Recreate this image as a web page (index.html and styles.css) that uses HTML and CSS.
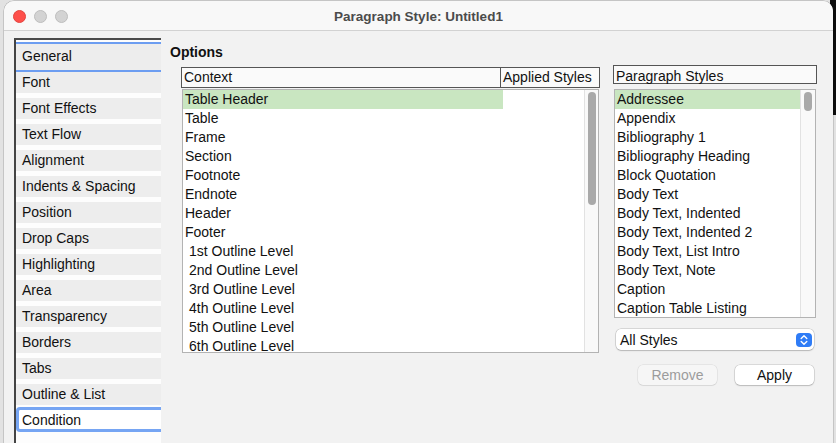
FILE: index.html
```html
<!DOCTYPE html>
<html lang="en">
<head>
<meta charset="utf-8">
<title>Paragraph Style: Untitled1</title>
<link rel="stylesheet" href="styles.css">
</head>
<body>
<div class="window">
  <header class="titlebar">
    <div class="lights">
      <span class="light red"></span>
      <span class="light"></span>
      <span class="light"></span>
    </div>
    <div class="title">Paragraph Style: Untitled1</div>
    <div></div>
  </header>
  <div class="content">
    <nav class="tabs">
      <div class="tab selected">General</div>
      <div class="tab">Font</div>
      <div class="tab">Font Effects</div>
      <div class="tab">Text Flow</div>
      <div class="tab">Alignment</div>
      <div class="tab">Indents &amp; Spacing</div>
      <div class="tab">Position</div>
      <div class="tab">Drop Caps</div>
      <div class="tab">Highlighting</div>
      <div class="tab">Area</div>
      <div class="tab">Transparency</div>
      <div class="tab">Borders</div>
      <div class="tab">Tabs</div>
      <div class="tab before-focus">Outline &amp; List</div>
      <div class="tab focused">Condition</div>
    </nav>
    <main class="main">
      <h2 class="heading">Options</h2>
      <div class="columns">
        <section class="context">
          <div class="thead">
            <span class="th th-ctx">Context</span>
            <span class="th th-app">Applied Styles</span>
          </div>
          <div class="list ctx-list">
            <div class="rows">
              <div class="row selected">Table Header</div>
              <div class="row">Table</div>
              <div class="row">Frame</div>
              <div class="row">Section</div>
              <div class="row">Footnote</div>
              <div class="row">Endnote</div>
              <div class="row">Header</div>
              <div class="row">Footer</div>
              <div class="row indent">1st Outline Level</div>
              <div class="row indent">2nd Outline Level</div>
              <div class="row indent">3rd Outline Level</div>
              <div class="row indent">4th Outline Level</div>
              <div class="row indent">5th Outline Level</div>
              <div class="row indent">6th Outline Level</div>
            </div>
            <div class="scroll"><div class="thumb ctx-thumb"></div></div>
          </div>
        </section>
        <section class="pstyles">
          <div class="ps-head">Paragraph Styles</div>
          <div class="list ps-list">
            <div class="rows">
              <div class="row selected">Addressee</div>
              <div class="row">Appendix</div>
              <div class="row">Bibliography 1</div>
              <div class="row">Bibliography Heading</div>
              <div class="row">Block Quotation</div>
              <div class="row">Body Text</div>
              <div class="row">Body Text, Indented</div>
              <div class="row">Body Text, Indented 2</div>
              <div class="row">Body Text, List Intro</div>
              <div class="row">Body Text, Note</div>
              <div class="row">Caption</div>
              <div class="row">Caption Table Listing</div>
            </div>
            <div class="scroll"><div class="thumb ps-thumb"></div></div>
          </div>
          <div class="select">
            <span class="select-label">All Styles</span>
            <svg class="stepper" width="16" height="14" viewBox="0 0 16 14">
              <rect x="0" y="0" width="16" height="14" rx="4" fill="#2f7cf6"/>
              <path d="M5.2 5.4 L8 2.8 L10.8 5.4" fill="none" stroke="#fff" stroke-width="1.4" stroke-linecap="round" stroke-linejoin="round"/>
              <path d="M5.2 8.6 L8 11.2 L10.8 8.6" fill="none" stroke="#fff" stroke-width="1.4" stroke-linecap="round" stroke-linejoin="round"/>
            </svg>
          </div>
          <div class="buttons">
            <button class="btn disabled" type="button">Remove</button>
            <button class="btn" type="button">Apply</button>
          </div>
        </section>
      </div>
    </main>
  </div>
</div>
</body>
</html>
```
FILE: styles.css
```css
html, body {
  margin: 0;
  padding: 0;
}
body {
  height: 443px;
  overflow: hidden;
  background: linear-gradient(#0d0d0d, #0d0d0d) right top / 6px 115px no-repeat, #e2e2e2;
  font-family: "Liberation Sans", Arial, sans-serif;
  font-size: 14px;
  color: #111;
}
.window {
  margin: 1px 3px 0 4px;
  height: 470px;
  background: #f2f2f2;
  border-radius: 10px 10px 0 0;
  box-shadow: 0 0 0 0.5px rgba(0,0,0,0.25);
  overflow: hidden;
}
.titlebar {
  height: 29px;
  background: #f8f8f8;
  border-bottom: 1px solid #d2d2d2;
  display: grid;
  grid-template-columns: 1fr auto 1fr;
  align-items: center;
}
.lights {
  display: flex;
  gap: 8px;
  padding-left: 9px;
  padding-top: 1px;
}
.light {
  width: 11px;
  height: 11px;
  border-radius: 50%;
  background: #d3d3d3;
  border: 0.5px solid #bdbdbd;
}
.light.red {
  background: #fe4f4a;
  border-color: #e2453f;
}
.title {
  font-weight: bold;
  font-size: 13.5px;
  color: #4b4b4b;
  padding-top: 1px;
}
.content {
  display: flex;
  align-items: flex-start;
  padding: 7px 0 0 10px;
}
.tabs {
  width: 145px;
  height: 420px;
  background: #fdfdfd;
  border-left: 2px solid #444;
  border-top: 2px solid #4a4a4a;
  padding-top: 2px;
  display: flex;
  flex-direction: column;
}
.tab {
  height: 21px;
  line-height: 21px;
  background: #ededed;
  padding-left: 6px;
  margin-bottom: 5px;
  color: #111;
}
.tab.selected {
  height: 26px;
  line-height: 24px;
  border-top: 2px solid #6c9df1;
  border-bottom: 2px solid #6c9df1;
  margin-bottom: 0;
}
.tab.before-focus {
  margin-bottom: 2px;
}
.tab.focused {
  height: 19px;
  line-height: 20px;
  background: #fff;
  border: 3px solid #76a5f3;
  border-right: none;
  border-radius: 4px 0 0 4px;
  padding-left: 3px;
}
.main {
  margin-left: 9px;
  padding-top: 6px;
  flex: 1;
}
.heading {
  margin: 0;
  font-size: 14px;
  line-height: 16px;
  font-weight: bold;
  color: #111;
}
.columns {
  display: flex;
  margin-top: 5px;
  align-items: flex-start;
}
.context {
  margin-left: 11px;
  width: 419px;
  padding-top: 2px;
}
.thead {
  display: flex;
  height: 21px;
  box-sizing: border-box;
  border: 1px solid #555;
  background: #fafafa;
}
.th {
  line-height: 19px;
  padding-left: 2px;
}
.th-ctx {
  width: 316px;
  border-right: 1px solid #555;
}
.th-app {
  flex: 1;
}
.list {
  display: flex;
  background: #fff;
  border: 1px solid #b3b3b3;
  overflow: hidden;
  box-sizing: border-box;
}
.ctx-list {
  margin: 1px 1px 0 1px;
  height: 264px;
}
.rows {
  flex: 1;
  overflow: hidden;
}
.row {
  height: 19px;
  line-height: 19px;
  padding-left: 2px;
  white-space: nowrap;
  color: #111;
}
.row.indent {
  padding-left: 6px;
}
.row.selected {
  background: #c9e6c1;
}
.ctx-list .row.selected {
  width: 318px;
}
.scroll {
  width: 13px;
  border-left: 1px solid #e2e2e2;
  background: #f9f9f9;
}
.thumb {
  width: 8px;
  margin: 2px 0 0 3px;
  border-radius: 4px;
  background: #a9a9a9;
}
.ctx-thumb {
  height: 113px;
}
.ps-thumb {
  height: 19px;
}
.pstyles {
  margin-left: 13px;
  width: 204px;
}
.ps-head {
  height: 19px;
  line-height: 20px;
  box-sizing: border-box;
  border: 1px solid #555;
  background: #fafafa;
  padding-left: 2px;
}
.ps-list {
  margin: 5px 1px 0 1px;
  height: 229px;
}
.ps-list .scroll {
  width: 14px;
}
.select {
  margin: 11px 0 0 3px;
  width: 198px;
  height: 21px;
  box-sizing: border-box;
  background: #fff;
  border-radius: 5px;
  box-shadow: 0 0 0 0.5px rgba(0,0,0,0.22), 0 1px 1.5px rgba(0,0,0,0.15);
  display: flex;
  align-items: center;
  justify-content: space-between;
  padding: 0 2px 0 4px;
}
.select-label {
  color: #111;
}
.stepper {
  display: block;
}
.buttons {
  display: flex;
  justify-content: flex-end;
  gap: 18px;
  margin: 15px 3px 0 0;
}
.btn {
  width: 79px;
  height: 20px;
  padding: 0;
  border: none;
  border-radius: 5px;
  background: #fff;
  font-family: "Liberation Sans", Arial, sans-serif;
  font-size: 14px;
  color: #111;
  box-shadow: 0 0 0 0.5px rgba(0,0,0,0.2), 0 1px 1.5px rgba(0,0,0,0.15);
}
.btn.disabled {
  background: #f6f6f6;
  color: #9c9c9c;
  box-shadow: 0 0 0 0.5px rgba(0,0,0,0.1), 0 1px 1px rgba(0,0,0,0.06);
}
```
